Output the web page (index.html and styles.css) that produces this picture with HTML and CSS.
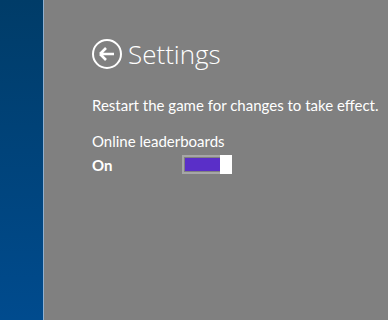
FILE: index.html
```html
<!DOCTYPE html>
<html lang="en">
<head>
  <meta charset="UTF-8">
  <title>Settings</title>
  <link rel="stylesheet" href="styles.css">
</head>
<body>
  <div class="app">
    <div class="side"></div>
    <div class="panel">
      <div class="header">
        <svg class="back" width="32" height="32" viewBox="0 0 32 32">
          <circle cx="16" cy="16" r="14" fill="none" stroke="#fff" stroke-width="2"/>
          <path d="M9 16 L15 10 M9 16 L15 22 M9 16 L23 16" fill="none" stroke="#fff" stroke-width="2.6"/>
        </svg>
        <h1>Settings</h1>
      </div>
      <p class="note">Restart the game for changes to take effect.</p>
      <div class="setting">
        <div class="label">Online leaderboards</div>
        <div class="row">
          <span class="state">On</span>
          <div class="toggle">
            <div class="track"></div>
            <div class="thumb"></div>
          </div>
        </div>
      </div>
    </div>
  </div>
</body>
</html>
```

FILE: styles.css
```css
* {
  box-sizing: border-box;
}

body {
  margin: 0;
  height: 320px;
  font-family: Lato, "Open Sans", sans-serif;
  color: #fff;
  overflow: hidden;
}

.app {
  display: flex;
  height: 100%;
}

.side {
  width: 44px;
  background: linear-gradient(to bottom, #003c68, #004b8e);
  border-right: 1px solid #8fb0d0;
}

.panel {
  flex: 1;
  background-color: #808080;
  padding: 38px 0 0 47px;
}

.header {
  display: flex;
  align-items: center;
  gap: 5px;
}

.header h1 {
  margin: 0;
  font-family: "Open Sans", sans-serif;
  font-size: 26px;
  font-weight: 300;
  line-height: 32px;
}

.note {
  margin: 25px 0 0 1px;
  font-size: 15px;
  line-height: 20px;
  white-space: nowrap;
}

.setting {
  margin: 16px 0 0 1px;
}

.label {
  font-size: 15px;
  line-height: 20px;
}

.row {
  display: flex;
  align-items: center;
  margin-top: 4px;
}

.state {
  width: 90px;
  font-size: 15px;
  font-weight: 700;
}

.toggle {
  display: flex;
  width: 50px;
  height: 19px;
  border: 2px solid #a6a6a6;
  border-right: none;
}

.track {
  flex: 1;
  margin: 1px 0 1px 1px;
  background-color: #5a2fc8;
}

.thumb {
  width: 12px;
  margin: -2px 0;
  background-color: #fff;
}
```
